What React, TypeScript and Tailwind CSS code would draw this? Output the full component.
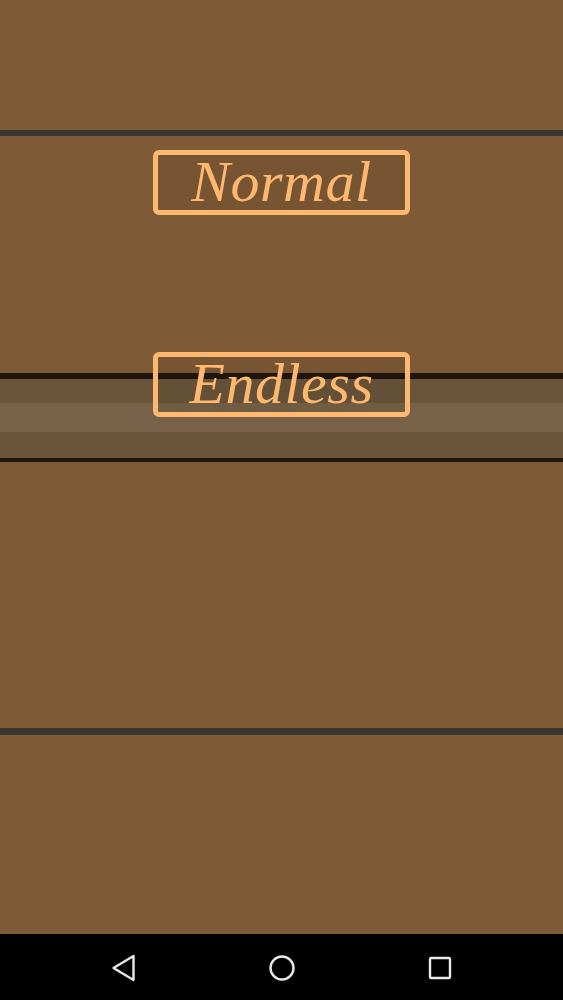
import React from 'react';

const serif = { fontFamily: '"Liberation Serif", "Times New Roman", serif' };

const ModeButton: React.FC<{ label: string; className?: string }> = ({ label, className = '' }) => (
  <button
    className={`w-[257px] h-[65px] flex items-center justify-center border-[5px] border-[#ffb870] rounded-[6px] bg-black/[0.06] text-[#ffb870] italic text-[58px] leading-none ${className}`}
    style={serif}
  >
    <span className="-mt-[2px] tracking-[0.5px]">{label}</span>
  </button>
);

const App: React.FC = () => {
  return (
    <div className="w-full h-[1000px] flex flex-col bg-[#7f5a36] overflow-hidden">
      <div className="h-[130px]" />
      <div className="h-[6px] bg-[#3b3633]" />

      <div className="h-[237px] flex flex-col items-center">
        <ModeButton label="Normal" className="mt-[14px]" />
      </div>

      <div className="relative h-[89px] flex flex-col">
        <div className="h-[6px] bg-[#1f170f]" />
        <div className="h-[24px] bg-[#6b553a]" />
        <div className="h-[29px] bg-[#776148]" />
        <div className="h-[26px] bg-[#6b553a]" />
        <div className="h-[4px] bg-[#1f170f]" />
        <ModeButton label="Endless" className="absolute top-[-21px] left-[153px]" />
      </div>

      <div className="h-[266px]" />
      <div className="h-[7px] bg-[#3c3632]" />
      <div className="flex-1" />

      <div className="h-[66px] bg-black flex items-center justify-center gap-[130px] pt-[2px]">
        <svg width="28" height="28" viewBox="0 0 28 28" fill="none" stroke="#e8e8e8" strokeWidth="2.4" strokeLinejoin="round">
          <path d="M23.5 2 L3.5 14 L23.5 26 Z" />
        </svg>
        <svg width="28" height="28" viewBox="0 0 28 28" fill="none" stroke="#e8e8e8" strokeWidth="2.4">
          <circle cx="14" cy="14" r="11.5" />
        </svg>
        <svg width="28" height="28" viewBox="0 0 28 28" fill="none" stroke="#e8e8e8" strokeWidth="2.4" strokeLinejoin="round">
          <rect x="4" y="4" width="20" height="20" rx="1" />
        </svg>
      </div>
    </div>
  );
};

export default App;
